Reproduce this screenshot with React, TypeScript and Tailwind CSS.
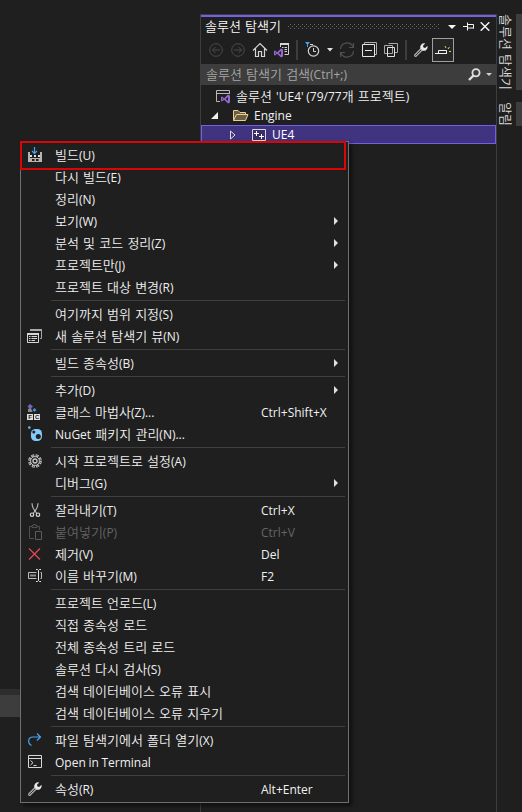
import type { ReactNode } from 'react';

type MenuEntry = {
  label: string;
  icon?: ReactNode;
  shortcut?: string;
  submenu?: boolean;
  disabled?: boolean;
};

type IconProps = {
  children: ReactNode;
  className?: string;
};

// Latin runs use a slightly smaller face than the Hangul around them
function Label({ text }: { text: string }) {
  return text.split(/([!-~]+(?: [!-~]+)*)/).map((part, i) =>
    i % 2 === 1 ? (
      <span key={i} className="font-['Open_Sans',sans-serif] text-[12px] font-normal [word-spacing:-0.5px]">
        {part}
      </span>
    ) : (
      part
    ),
  );
}

function Icon({ children, className = '' }: IconProps) {
  return (
    <svg width="16" height="16" viewBox="0 0 16 16" fill="none" stroke="#d6d6d6" className={`shrink-0 overflow-visible ${className}`}>
      {children}
    </svg>
  );
}

const wrench = (
  <>
    <path d="M2.6 13.4 L9.3 6.7" stroke="#a8a8a8" strokeWidth="3.2" strokeLinecap="round" />
    <path d="M2.6 13.4 L9 7" stroke="#2a2a2a" strokeWidth="0.9" strokeLinecap="round" />
    <path
      d="M12.2 1.5 A4 4 0 0 0 7.3 6.4 L9.6 8.7 A4 4 0 0 0 14.5 3.8 L12.2 6 L10.4 5.6 L10 3.8 Z"
      fill="#e8e8e8"
      stroke="none"
    />
  </>
);

const vsLogo = (
  <path
    d="M0 2.6 L1 2 L3.2 3.8 L7 0 L9 0.9 V8.1 L7 9 L3.2 5.2 L1 7 L0 6.4 Z M1.2 3.6 V5.4 L2.2 4.5 Z M7 2.6 L4.6 4.5 L7 6.4 Z"
    fill="#9468d0"
    fillRule="evenodd"
    stroke="none"
  />
);

const buildIcon = (
  <Icon>
    <path d="M1 5 H3 V7 H13 V5 H15 V15 H1 Z" fill="#b5b5b5" stroke="none" />
    <path d="M3 5 H13 V11 H3 Z M5 12 H7.5 V14 H5 Z M9 12 H11.5 V14 H9 Z" fill="#1f1f1f" stroke="none" />
    <path d="M3 8 H5 V10 H3 Z M7 8 H9 V10 H7 Z M11 8 H13 V10 H11 Z" fill="#e0e0e0" stroke="none" />
    <path d="M7.5 0 V6.5 M5 4 L7.5 6.5 L10 4" stroke="#4aa3f0" strokeWidth="1.2" />
  </Icon>
);

const newViewIcon = (
  <Icon>
    <path d="M3.5 3 V1.5 H14.5 V10.5 H13" stroke="#a8a8a8" />
    <path d="M3 2 H15" stroke="#a8a8a8" strokeWidth="2" />
    <path d="M0.5 5.5 H11.5 V14.5 H0.5 Z" />
    <path d="M0 6 H12" strokeWidth="2" />
    <path d="M2 8.5 H3.5 M4.5 8.5 H10 M2 10.5 H3.5 M4.5 10.5 H10 M2 12.5 H3.5 M4.5 12.5 H8" />
  </Icon>
);

const classWizardIcon = (
  <Icon>
    <path d="M3 0 L6 2.5 L3 5 L0.5 2.5 Z" fill="#7267c8" stroke="none" />
    <path d="M1 5 L4 4 L5.5 8 H1 Z" fill="#8a8a8a" stroke="none" />
    <path d="M7.5 4 L9.5 6 L7.5 8 L5.5 6 Z" fill="#3f94df" stroke="none" />
    <path d="M0 10 H6 V16 H0 Z M7 10 H13 V16 H7 Z" fill="#dedede" stroke="none" />
    <text x="1.2" y="15.1" fontSize="6" fontWeight="700" fontFamily="Liberation Sans" fill="#1f1f1f" stroke="none">F</text>
    <text x="7.9" y="15.1" fontSize="6" fontWeight="700" fontFamily="Liberation Sans" fill="#1f1f1f" stroke="none">C</text>
  </Icon>
);

const nugetIcon = (
  <Icon>
    <circle cx="2.3" cy="1.6" r="1.3" fill="#63b5ee" stroke="none" />
    <rect x="4" y="3" width="11" height="12" rx="4.5" fill="#83c9fa" stroke="none" />
    <circle cx="6.8" cy="6" r="1.5" fill="#1f1f1f" stroke="none" />
    <circle cx="11.3" cy="10.6" r="2.5" fill="#1f1f1f" stroke="none" />
  </Icon>
);

const gearIcon = (
  <Icon>
    <circle cx="8" cy="8" r="5.7" stroke="#c9c9c9" strokeWidth="2.2" strokeDasharray="3 1.477" />
    <circle cx="8" cy="8" r="5.7" stroke="#1f1f1f" strokeWidth="0.8" strokeDasharray="1.2 3.277" strokeDashoffset="-0.9" />
    <circle cx="8" cy="8" r="4.4" stroke="#c9c9c9" strokeWidth="0.9" />
    <circle cx="8" cy="8" r="2" stroke="#c9c9c9" strokeWidth="1.3" />
  </Icon>
);

const cutIcon = (
  <Icon>
    <path d="M5 1.2 Q5 4 6.5 6.8 L9.8 11.5 M11 1.2 Q11 4 9.5 6.8 L6.2 11.5" stroke="#bdbdbd" strokeWidth="1.1" />
    <circle cx="5" cy="12.7" r="1.7" strokeWidth="1.2" />
    <circle cx="11" cy="12.7" r="1.7" strokeWidth="1.2" />
  </Icon>
);

const pasteIcon = (
  <Icon>
    <path d="M7 14.5 H2.5 V2.5 H5 M10 2.5 H12.5 V6 M5 3.5 V1.5 H6.5 V0.5 H8.5 V1.5 H10 V3.5 Z" stroke="#505050" />
    <path d="M8.5 7.5 H14.5 V15.5 H8.5 Z" stroke="#5c5c5c" />
  </Icon>
);

const removeIcon = (
  <Icon>
    <path d="M2 2.5 L13 13.5 M13 2.5 L2 13.5" stroke="#e04858" strokeWidth="1.2" />
  </Icon>
);

const renameIcon = (
  <Icon>
    <path d="M9.5 4.5 H1.5 V10.5 H9.5 M13.5 4.5 H14.5 V10.5 H13.5" stroke="#bdbdbd" />
    <path d="M3 7.5 H9" stroke="#8c8c8c" strokeWidth="2" />
    <path d="M9 1.5 H10.5 L11.5 2.5 L12.5 1.5 H14 M11.5 2.5 V12.5 M9 13.5 H10.5 L11.5 12.5 L12.5 13.5 H14" stroke="#e5e5e5" />
  </Icon>
);

const openFolderIcon = (
  <Icon>
    <path d="M4.5 13.5 C0.5 11.5 0.5 5 6 5 H13.5 M10 1.5 L13.5 5 L10 8.5" stroke="#4aa3f0" strokeWidth="1.2" />
  </Icon>
);

const terminalIcon = (
  <Icon>
    <path d="M1.5 1.5 H14.5 V13.5 H1.5 Z M1 4.5 H15" />
    <path d="M3.5 6.5 L6 8.7 L3.5 11 M6.5 11.5 H9.5" />
  </Icon>
);

const groups: MenuEntry[][] = [
  [
    { label: '빌드(U)', icon: buildIcon },
    { label: '다시 빌드(E)' },
    { label: '정리(N)' },
    { label: '보기(W)', submenu: true },
    { label: '분석 및 코드 정리(Z)', submenu: true },
    { label: '프로젝트만(J)', submenu: true },
    { label: '프로젝트 대상 변경(R)' },
  ],
  [{ label: '여기까지 범위 지정(S)' }, { label: '새 솔루션 탐색기 뷰(N)', icon: newViewIcon }],
  [{ label: '빌드 종속성(B)', submenu: true }],
  [
    { label: '추가(D)', submenu: true },
    { label: '클래스 마법사(Z)...', icon: classWizardIcon, shortcut: 'Ctrl+Shift+X' },
    { label: 'NuGet 패키지 관리(N)...', icon: nugetIcon },
  ],
  [
    { label: '시작 프로젝트로 설정(A)', icon: gearIcon },
    { label: '디버그(G)', submenu: true },
  ],
  [
    { label: '잘라내기(T)', icon: cutIcon, shortcut: 'Ctrl+X' },
    { label: '붙여넣기(P)', icon: pasteIcon, shortcut: 'Ctrl+V', disabled: true },
    { label: '제거(V)', icon: removeIcon, shortcut: 'Del' },
    { label: '이름 바꾸기(M)', icon: renameIcon, shortcut: 'F2' },
  ],
  [
    { label: '프로젝트 언로드(L)' },
    { label: '직접 종속성 로드' },
    { label: '전체 종속성 트리 로드' },
    { label: '솔루션 다시 검사(S)' },
    { label: '검색 데이터베이스 오류 표시' },
    { label: '검색 데이터베이스 오류 지우기' },
  ],
  [
    { label: '파일 탐색기에서 폴더 열기(X)', icon: openFolderIcon },
    { label: 'Open in Terminal', icon: terminalIcon },
  ],
  [{ label: '속성(R)', icon: <Icon>{wrench}</Icon>, shortcut: 'Alt+Enter' }],
];

function MenuRow({ label, icon, shortcut, submenu, disabled }: MenuEntry) {
  return (
    <div className={`flex h-[22px] items-center pl-1.5 ${disabled ? 'text-[#656565]' : 'text-[#f0f0f0]'}`}>
      <span className="w-4 shrink-0">{icon}</span>
      <span className="ml-3 w-[206px] shrink-0"><Label text={label} /></span>
      <span className="w-[73px] shrink-0">{shortcut && <Label text={shortcut} />}</span>
      {submenu && (
        <svg width="4" height="8" viewBox="0 0 4 8" className="shrink-0">
          <path d="M0 0 L4 4 L0 8 Z" fill="#e0e0e0" />
        </svg>
      )}
    </div>
  );
}

function ContextMenu() {
  return (
    <div className="absolute left-5 top-[141px] h-[662px] w-[329px] border border-[#707070] bg-[#1f1f1f] py-0.5 shadow-[3px_3px_4px_rgba(0,0,0,0.5)]">
      {groups.map((group, i) => (
        <div key={i}>
          {i > 0 && <div className="my-0.5 ml-[30px] mr-[3px] h-px bg-[#3f3f3f]" />}
          {group.map((entry) => (
            <MenuRow key={entry.label} {...entry} />
          ))}
        </div>
      ))}
      <div className="absolute -left-px -top-px h-[29px] w-[326px] border-2 border-[#d80606]" />
    </div>
  );
}

function Caret({ className = '' }: { className?: string }) {
  return (
    <svg width="6" height="4" viewBox="0 0 6 4" className={`shrink-0 ${className}`}>
      <path d="M0 0 H6 L3 3.6 Z" fill="#e0e0e0" />
    </svg>
  );
}

function TitleBar() {
  return (
    <div className="flex h-[19px] items-center pl-1 text-[#fafafa]">
      <span className="w-[83px] shrink-0 pb-0.5">솔루션 탐색기</span>
      <svg width="152" height="5" className="shrink-0" shapeRendering="crispEdges">
        <defs>
          <pattern id="grip" width="4" height="4" patternUnits="userSpaceOnUse">
            <path d="M2 0 H3 V1 H2 Z M0 2 H1 V3 H0 Z" fill="#686868" />
          </pattern>
        </defs>
        <rect width="152" height="5" fill="url(#grip)" />
      </svg>
      <svg width="8" height="4" viewBox="0 0 8 4" className="ml-2 shrink-0">
        <path d="M0 0 H8 L4 4 Z" fill="#f5f5f5" />
      </svg>
      <svg width="11" height="9" viewBox="0 0 11 9" fill="none" stroke="#f5f5f5" className="ml-[7px] shrink-0">
        <path d="M0 4.5 H4 M4.5 0.5 V8.5 M5 2.5 H10.5 V6.5 M5 6 H11" />
      </svg>
      <svg width="10" height="9" viewBox="0 0 10 9" fill="none" stroke="#f5f5f5" strokeWidth="1.5" className="ml-1.5 shrink-0">
        <path d="M0.7 0.3 L9.3 8.7 M9.3 0.3 L0.7 8.7" />
      </svg>
    </div>
  );
}

function Toolbar() {
  return (
    <div className="flex h-7 items-center pl-[7px]">
      <Icon>
        <circle cx="8" cy="8" r="6.3" stroke="#4b4b4b" />
        <path d="M12 8 H4.5 M7.5 5 L4.5 8 L7.5 11" stroke="#4b4b4b" />
      </Icon>
      <Icon className="ml-1.5">
        <circle cx="8" cy="8" r="6.3" stroke="#4b4b4b" />
        <path d="M4 8 H11.5 M8.5 5 L11.5 8 L8.5 11" stroke="#4b4b4b" />
      </Icon>
      <Icon className="ml-1.5">
        <path d="M1 8.5 L8 1.5 L15 8.5 M3.5 6.5 V14.5 H6.5 V9.5 H9.5 V14.5 H12.5 V6.5" strokeWidth="1.2" />
      </Icon>
      <Icon className="ml-1.5">
        <path d="M6.5 5 V1.5 H14.5 V12.5 H10.5" stroke="#d0d0d0" />
        <path d="M6 2 H15" strokeWidth="2" />
        <path d="M8 5.5 H9.5 M10.5 5.5 H13 M10.5 7.5 H13 M10.5 9.5 H13" />
        <g transform="translate(0 6.5)">{vsLogo}</g>
      </Icon>
      <div className="ml-1.5 h-5 w-0.5 bg-[#3d3d3d]" />
      <Icon className="ml-[7px]">
        <path d="M0 0 H5 L3 2.5 V5 H2 V2.5 Z" fill="#4aa3f0" stroke="none" />
        <circle cx="8.5" cy="9" r="5.2" strokeWidth="1.2" />
        <path d="M8.5 6 V9.5 H11 M5 2.5 H8" />
      </Icon>
      <Caret className="ml-1.5" />
      <Icon className="ml-1.5">
        <path d="M1.5 7 A6.5 6.5 0 0 1 14 5 M14.5 1 V5.5 H10 M14.5 9 A6.5 6.5 0 0 1 2 11 M1.5 15 V10.5 H6" stroke="#505050" strokeWidth="1.2" />
      </Icon>
      <Icon className="ml-1.5">
        <path d="M3.5 2 V0.5 H15.5 V12.5 H14" stroke="#b0b0b0" />
        <path d="M1.5 2.5 H13.5 V14.5 H1.5 Z M4 8.5 H11" stroke="#e5e5e5" />
      </Icon>
      <Icon className="ml-1.5">
        <path d="M1.5 3.5 H9.5 V11.5 H1.5 Z M5.5 1.5 H14.5 V10.5 H11" stroke="#a8a8a8" />
        <path d="M4.5 5.5 H11.5 V14.5 H4.5 Z" stroke="#e0e0e0" />
      </Icon>
      <div className="ml-1.5 h-5 w-0.5 bg-[#3d3d3d]" />
      <Icon className="ml-1.5">{wrench}</Icon>
      <div className="ml-[3px] flex h-6 w-[22px] items-center justify-center border border-[#a0a0a0] bg-[#262626]">
        <Icon>
          <path d="M0 11.5 H12 M3.5 11 V8.5 H11.5 V11" stroke="#f0f0f0" />
          <path d="M10 4 L11 6 M14.5 5 L13 7 M14 9.5 H16" stroke="#e6c867" />
        </Icon>
      </div>
    </div>
  );
}

function SearchBox() {
  return (
    <div className="flex h-[21px] items-center bg-[#3d3d3d] pl-[5px] text-[#a6a6a6]">
      <span className="w-[262px] shrink-0"><Label text="솔루션 탐색기 검색(Ctrl+;)" /></span>
      <svg width="13" height="13" viewBox="0 0 13 13" fill="none" stroke="#dedede" className="shrink-0">
        <circle cx="8" cy="4.8" r="3.6" strokeWidth="1.8" />
        <path d="M5.5 7.5 L1 12" strokeWidth="2.4" />
      </svg>
      <svg width="6" height="3" viewBox="0 0 6 3" className="ml-[5px] shrink-0">
        <path d="M0 0 H6 L3 3 Z" fill="#cfcfcf" />
      </svg>
    </div>
  );
}

function SolutionTree() {
  return (
    <div className="pt-0.5 text-[#f0f0f0]">
      <div className="flex h-[19px] items-center pl-3.5">
        <Icon>
          <path d="M5 12.5 H1.5 V1.5 H14.5 V5 M1 4.5 H15" stroke="#b8b8b8" />
          <g transform="translate(6 5.5)">{vsLogo}</g>
        </Icon>
        <span className="ml-[5px]"><Label text="솔루션 'UE4' (79/77개 프로젝트)" /></span>
      </div>
      <div className="flex h-[19px] items-center pl-2.5">
        <svg width="7" height="7" viewBox="0 0 7 7" className="shrink-0">
          <path d="M7 0 V7 H0 Z" fill="#f0f0f0" />
        </svg>
        <Icon className="ml-[14px]">
          <path d="M1.5 12.5 V2.5 H6 L8 4.5 H13.5 V6.5 M1.5 12.5 L4.5 6.5 H16 L13.5 12.5 Z" fill="#6b5d40" stroke="#e8cf99" />
        </Icon>
        <span className="ml-1.5"><Label text="Engine" /></span>
      </div>
      <div className="flex h-[19px] items-center border border-[#7160e8] bg-[#403380] pl-[28px] text-white">
        <svg width="6" height="10" viewBox="0 0 6 10" fill="none" stroke="#e0e0e0" className="shrink-0">
          <path d="M0.5 1 L5 5 L0.5 9 Z" />
        </svg>
        <Icon className="ml-[15px]">
          <path d="M1.5 2.5 H14.5 V13.5 H1.5 Z" fill="#372e6a" stroke="#d8d8d8" />
          <path d="M3 6.5 H8 M5.5 4 V9 M8 9.5 H13 M10.5 7 V12" stroke="#ffffff" />
        </Icon>
        <span className="ml-[5px]"><Label text="UE4" /></span>
      </div>
    </div>
  );
}

function SideTabs() {
  return (
    <div className="flex flex-1 flex-col gap-3 pt-3.5 text-[#dcdcdc]">
      <div className="flex h-[76px] justify-between">
        <span className="ml-px w-[17px] leading-[17px] [text-orientation:sideways] [writing-mode:vertical-rl]">솔루션 탐색기</span>
        <div className="w-1.5 bg-[#3d3d3d]" />
      </div>
      <div className="flex h-6 justify-between">
        <span className="ml-px w-[17px] leading-[17px] [text-orientation:sideways] [writing-mode:vertical-rl]">알림</span>
        <div className="w-1.5 bg-[#3d3d3d]" />
      </div>
    </div>
  );
}

export default function App() {
  return (
    <div className="relative flex h-[812px] w-[522px] overflow-hidden whitespace-nowrap bg-[#1f1f1f] font-['Noto_Sans_CJK_KR',sans-serif] text-[13px] font-[350] leading-[18px] [word-spacing:1.3px]">
      <div className="flex w-[200px] flex-col justify-end pb-[95px]">
        <div className="h-1.5 bg-[#2d2d2d]" />
        <div className="h-[22px] bg-[#3d3d3d]" />
      </div>
      <div className="mt-3.5 w-[297px] border border-b-0 border-[#3d3d3d]">
        <div className="h-0.5 bg-[#7160e8]" />
        <TitleBar />
        <Toolbar />
        <SearchBox />
        <SolutionTree />
      </div>
      <SideTabs />
      <ContextMenu />
    </div>
  );
}
